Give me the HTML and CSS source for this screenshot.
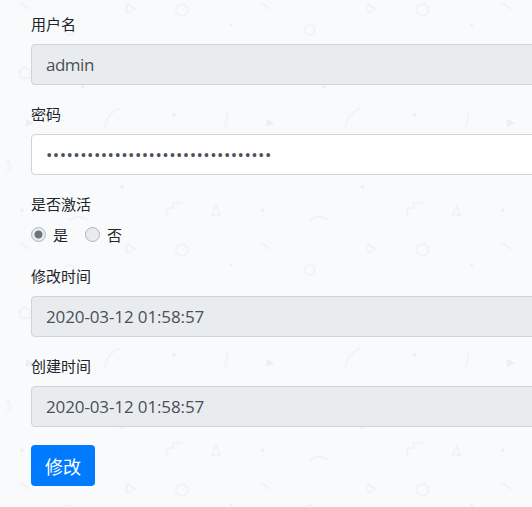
FILE: index.html
```html
<!DOCTYPE html>
<html lang="zh-CN">
<head>
<meta charset="utf-8">
<title>用户信息</title>
<link rel="stylesheet" href="styles.css">
</head>
<body>
<svg class="backdrop" aria-hidden="true" width="100%" height="100%">
  <defs>
    <pattern id="memphis" width="240.5" height="240" patternUnits="userSpaceOnUse">
      <g class="mark">
        <circle cx="182" cy="10" r="6"/>
        <path d="M127 4l0 9 8-4z"/>
        <path d="M20 3l10 6"/>
        <circle cx="69" cy="30" r="5"/>
        <path d="M25 67l6 4-2 7h-8l-2-7z"/>
        <path d="M105 127c1-9 7-16 15-19"/>
        <path d="M225 127l3-14"/>
        <path d="M167 217v-9h6v-5h9"/>
        <path d="M216 206l-4 9h8z"/>
        <path d="M69 220c6-4 13-4 19 0"/>
        <path d="M6 161h4l-2 4 3 1-1 4h-4"/>
      </g>
      <g class="dot">
        <circle cx="231" cy="25" r="1.6"/>
        <circle cx="83" cy="87" r="1.8"/>
        <circle cx="174" cy="115" r="1.8"/>
        <circle cx="122" cy="187" r="1.8"/>
        <circle cx="22" cy="210" r="1.8"/>
        <path d="M26 119l8 4-8 4z"/>
      </g>
    </pattern>
  </defs>
  <rect width="100%" height="100%" fill="url(#memphis)"/>
</svg>
<div class="clip">
<form class="profile">
  <div class="group">
    <label class="caption" for="username">用户名</label>
    <input class="field field-name" id="username" type="text" value="admin" disabled>
  </div>
  <div class="group">
    <label class="caption" for="password">密码</label>
    <input class="field field-live" id="password" type="password" value="12345678901234567890123456789012a">
  </div>
  <div class="group">
    <span class="caption">是否激活</span>
    <div class="choices">
      <label class="choice"><input class="radio" type="radio" name="active" checked disabled>是</label>
      <label class="choice"><input class="radio" type="radio" name="active" disabled>否</label>
    </div>
  </div>
  <div class="group">
    <label class="caption" for="modified">修改时间</label>
    <input class="field field-date" id="modified" type="text" value="2020-03-12 01:58:57" disabled>
  </div>
  <div class="group">
    <label class="caption" for="created">创建时间</label>
    <input class="field field-date" id="created" type="text" value="2020-03-12 01:58:57" disabled>
  </div>
  <button class="submit" type="button">修改</button>
</form>
</div>
</body>
</html>
```
FILE: styles.css
```css
* { box-sizing: border-box; }
html, body {
  margin: 0;
  height: 100%;
  overflow: hidden;
}
body {
  position: relative;
  background: #f9fafc;
  color: #212529;
  font-family: "Open Sans", "Noto Sans CJK SC", sans-serif;
  font-size: 14px;
}
.backdrop {
  position: absolute;
  inset: 0;
  filter: blur(0.6px);
}
.mark {
  fill: none;
  stroke: #f0f1f3;
  stroke-width: 1.6;
}
.dot { fill: #eceef1; }
.clip {
  position: relative;
  height: 100%;
  overflow: hidden;
}
.profile {
  width: 640px;
  padding: 12px 0 0 31px;
}
.group { margin-bottom: 17px; }
.caption {
  display: block;
  height: 24px;
  margin-bottom: 8px;
  font-family: "Noto Sans CJK SC", sans-serif;
  font-size: 15px;
  line-height: 24px;
}
.field {
  display: block;
  width: 100%;
  height: 41px;
  padding: 0 14px;
  border: 1px solid #ced4da;
  border-radius: 4px;
  background: #e9ecef;
  color: #495057;
  font-family: "Open Sans", "Noto Sans CJK SC", sans-serif;
  font-size: 17px;
  opacity: 1;
}
.field-name { letter-spacing: -0.5px; }
.field-live {
  background: #fff;
  letter-spacing: 0.45px;
}
.field-date { letter-spacing: -0.12px; }
.choices {
  display: flex;
  gap: 17px;
  height: 23px;
  align-items: center;
  transform: translateY(-1px);
}
.choice {
  display: flex;
  align-items: center;
  gap: 7px;
  font-family: "Noto Sans CJK SC", sans-serif;
  font-size: 15px;
}
.radio {
  appearance: none;
  width: 15px;
  height: 15px;
  margin: 0;
  border: 1px solid #adb5bd;
  border-radius: 50%;
  background: #e9ecef;
}
.radio:checked {
  background: radial-gradient(circle, #6c757d 0, #6c757d 3.6px, #e9ecef 4.4px);
}
.submit {
  display: block;
  width: 64px;
  height: 41px;
  margin-top: 18px;
  padding: 0;
  border: 0;
  border-radius: 4px;
  background: #007bff;
  color: #fff;
  font-family: "Noto Sans CJK SC", sans-serif;
  font-size: 18px;
}
```
